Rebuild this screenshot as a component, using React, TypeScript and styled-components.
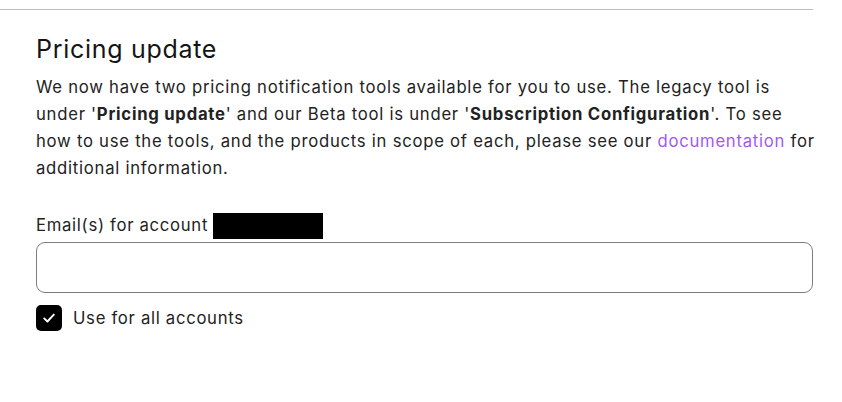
import React from "react";
import styled, { createGlobalStyle } from "styled-components";

const Global = createGlobalStyle`
  html, body { margin: 0; padding: 0; background: #fff; }
  body { font-family: Inter, "Noto Sans", sans-serif; color: #1a1a1a; }
`;

const Page = styled.div`
  width: 813px;
  padding-top: 9px;
`;

const Divider = styled.hr`
  margin: 0;
  border: none;
  border-top: 1px solid #bcbcbc;
`;

const Section = styled.section`
  padding: 23px 0 0 36px;
  display: flex;
  flex-direction: column;
`;

const Title = styled.h2`
  margin: 0;
  font-size: 25px;
  font-weight: 400;
  letter-spacing: 0.7px;
  line-height: 32px;
  color: #141414;
`;

const Body = styled.p`
  margin: 9px 0 0;
  font-size: 16.7px;
  letter-spacing: 0.74px;
  line-height: 27px;
  color: #222;
`;

const Line = styled.span`
  display: block;
  white-space: nowrap;
`;

const Link = styled.a`
  color: #a259f4;
  text-decoration: none;
`;

const Field = styled.div`
  margin-top: 30px;
  display: flex;
  flex-direction: column;
`;

const Label = styled.label`
  display: flex;
  align-items: center;
  gap: 5px;
  font-size: 16.7px;
  letter-spacing: 0.7px;
  line-height: 27px;
  color: #222;
`;

const Redacted = styled.span`
  display: inline-block;
  width: 110px;
  height: 26px;
  background: #000;
`;

const Input = styled.input`
  margin-top: 3px;
  box-sizing: border-box;
  width: 100%;
  height: 51px;
  border: 1px solid #7c7c7c;
  border-radius: 9px;
  font: inherit;
  padding: 0 12px;
  outline: none;
`;

const CheckRow = styled.label`
  margin-top: 12px;
  display: flex;
  align-items: center;
  gap: 11px;
  font-size: 16.7px;
  letter-spacing: 0.7px;
  line-height: 26px;
  color: #222;
`;

const Box = styled.span`
  width: 26px;
  height: 26px;
  border-radius: 5px;
  background: #000;
  display: flex;
  align-items: center;
  justify-content: center;
`;

export default function App() {
  return (
    <>
      <Global />
      <Page>
        <Divider />
        <Section>
          <Title>Pricing update</Title>
          <Body>
            <Line>We now have two pricing notification tools available for you to use. The legacy tool is</Line>
            <Line>
              under '<b>Pricing update</b>' and our Beta tool is under '<b>Subscription Configuration</b>'. To see
            </Line>
            <Line>
              how to use the tools, and the products in scope of each, please see our{" "}
              <Link href="#">documentation</Link> for
            </Line>
            <Line>additional information.</Line>
          </Body>
          <Field>
            <Label>
              Email(s) for account <Redacted />
            </Label>
            <Input type="text" />
          </Field>
          <CheckRow>
            <Box>
              <svg width="16" height="16" viewBox="0 0 16 16" fill="none">
                <path d="M3.2 8.4 L6.4 11.5 L12.8 4.6" stroke="#fff" strokeWidth="1.9" strokeLinecap="round" strokeLinejoin="round" />
              </svg>
            </Box>
            Use for all accounts
          </CheckRow>
        </Section>
      </Page>
    </>
  );
}
